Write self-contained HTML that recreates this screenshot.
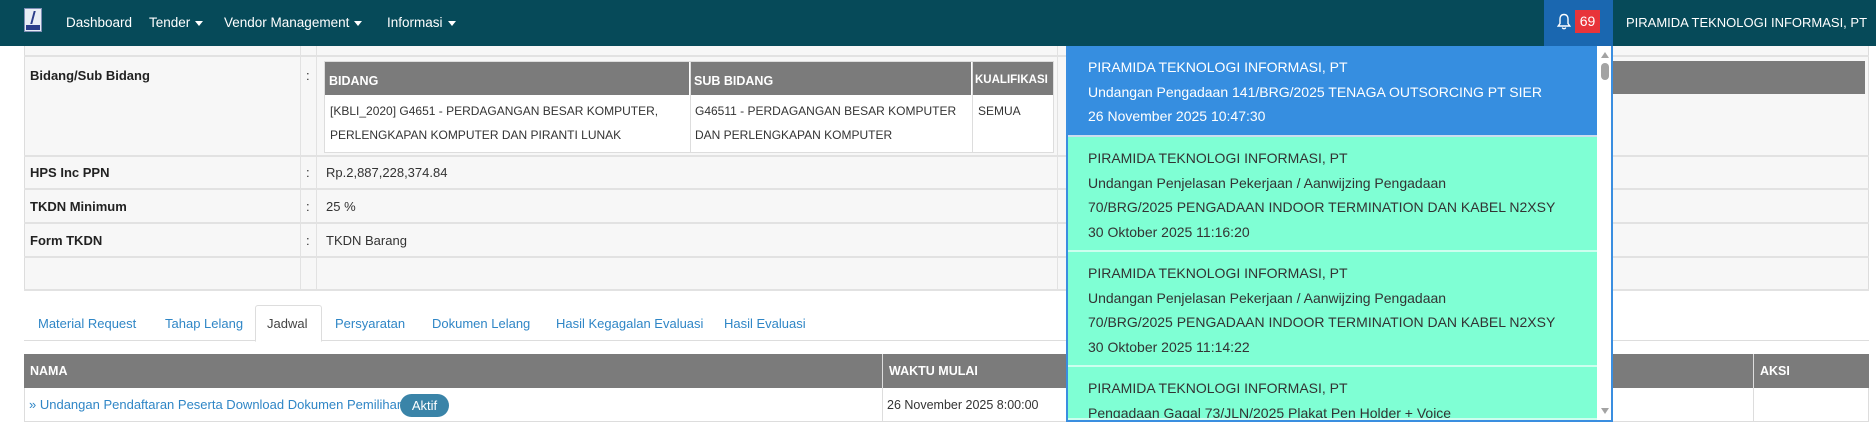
<!DOCTYPE html>
<html><head><meta charset="utf-8"><style>
*{box-sizing:border-box;margin:0;padding:0}
html,body{width:1876px;height:425px;overflow:hidden}
body{background:#fff;font-family:"Liberation Sans",sans-serif;font-size:13px;color:#333;position:relative}
.abs{position:absolute;white-space:nowrap}
.nav{left:0;top:0;width:1876px;height:46px;background:#064a59;color:#fff}
.nav .m{position:absolute;top:15px;font-size:13.5px;white-space:nowrap}
.car{display:inline-block;width:0;height:0;border-left:4px solid transparent;border-right:4px solid transparent;border-top:5px solid #fff;margin-left:5px;vertical-align:middle}
.box{left:24px;top:46px;width:1845px;height:245px;background:#f7f7f7;border:1px solid #ddd;border-top:none}
.hl{position:absolute;left:24px;width:1845px;height:2px;background:#e2e2e2}
.vl{position:absolute;width:1px;background:#e2e2e2}
.lbl{position:absolute;left:30px;font-weight:bold;font-size:13px;color:#222}
.col{position:absolute;left:306px;font-size:13px}
.val{position:absolute;left:326px;font-size:13px}
.it{position:absolute;left:324px;top:61px;width:730px;height:92px;background:#fff;border:1px solid #ddd}
.gh{position:absolute;background:#7b7b7b;color:#fff;font-weight:bold;font-size:12.5px;padding:12px 4px;white-space:nowrap;overflow:hidden}
.tc{position:absolute;font-size:12px;line-height:24px;color:#333;white-space:nowrap}
.dd{left:1066px;top:46px;width:547px;height:376px;border:2px solid #3a8ee0;border-top:none;background:#7fffd4;overflow:hidden}
.item{position:absolute;left:0;width:529px;height:115px;border-bottom:2px solid #cfe;font-size:14px;line-height:24.5px;padding:9px 0 0 20px;color:#333;white-space:nowrap;overflow:hidden}
.tab{position:absolute;top:316px;color:#2f86c6;font-size:13px;white-space:nowrap}
</style></head><body>
<div class="abs nav">
 <div class="abs" style="left:24px;top:8px;width:18px;height:24px;background:#e8edf5;border:1px solid #7f8fb5"><div style="position:absolute;left:7px;top:2px;width:2px;height:13px;background:#2a3d8a;transform:skewX(-15deg)"></div><div style="position:absolute;left:1px;top:16px;width:14px;height:5px;background:#2a3d8a"></div></div>
 <span class="m" style="left:66px">Dashboard</span>
 <span class="m" style="left:149px">Tender<i class="car"></i></span>
 <span class="m" style="left:224px">Vendor Management<i class="car"></i></span>
 <span class="m" style="left:387px">Informasi<i class="car"></i></span>
 <div class="abs" style="left:1544px;top:0;width:69px;height:46px;background:#1a67b0">
  <svg class="abs" style="left:13px;top:13px" width="14" height="17" viewBox="0 0 14 17"><path d="M7 1.5C4.2 1.5 3 3.6 3 6v4.5L1.2 13h11.6L11 10.5V6C11 3.6 9.8 1.5 7 1.5z" fill="none" stroke="#fff" stroke-width="1.4"/><path d="M5.3 14.5a1.8 1.8 0 0 0 3.4 0" fill="none" stroke="#fff" stroke-width="1.3"/></svg>
  <div class="abs" style="left:31px;top:10px;width:25px;height:23px;background:#e8343a;color:#fff;font-size:14px;text-align:center;line-height:23px">69</div>
 </div>
 <span class="m" style="left:1626px;font-size:13px">PIRAMIDA TEKNOLOGI INFORMASI, PT</span>
</div>

<div class="abs box"></div>
<div class="hl" style="top:55px"></div>
<div class="hl" style="top:155px"></div>
<div class="hl" style="top:188px"></div>
<div class="hl" style="top:222px"></div>
<div class="hl" style="top:256px"></div>
<div class="hl" style="top:289px"></div>
<div class="vl" style="left:300px;top:46px;height:244px"></div>
<div class="vl" style="left:316px;top:46px;height:244px"></div>
<div class="vl" style="left:1057px;top:46px;height:244px"></div>

<div class="lbl" style="top:68px">Bidang/Sub Bidang</div><div class="col" style="top:68px">:</div>
<div class="lbl" style="top:165px">HPS Inc PPN</div><div class="col" style="top:165px">:</div><div class="val" style="top:165px">Rp.2,887,228,374.84</div>
<div class="lbl" style="top:199px">TKDN Minimum</div><div class="col" style="top:199px">:</div><div class="val" style="top:199px">25 %</div>
<div class="lbl" style="top:233px">Form TKDN</div><div class="col" style="top:233px">:</div><div class="val" style="top:233px">TKDN Barang</div>

<div class="it"></div>
<div class="gh" style="left:325px;top:62px;width:364px;height:33px">BIDANG</div>
<div class="gh" style="left:690px;top:62px;width:281px;height:33px">SUB BIDANG</div>
<div class="gh" style="left:972px;top:62px;width:81px;height:33px;padding-left:3px;font-size:11.5px">KUALIFIKASI</div>
<div class="vl" style="left:690px;top:62px;height:90px;background:#ddd"></div>
<div class="vl" style="left:972px;top:62px;height:90px;background:#ddd"></div>
<div class="tc" style="left:330px;top:99px">[KBLI_2020] G4651 - PERDAGANGAN BESAR KOMPUTER,<br>PERLENGKAPAN KOMPUTER DAN PIRANTI LUNAK</div>
<div class="tc" style="left:695px;top:99px">G46511 - PERDAGANGAN BESAR KOMPUTER<br>DAN PERLENGKAPAN KOMPUTER</div>
<div class="tc" style="left:978px;top:99px">SEMUA</div>
<div class="gh" style="left:1613px;top:61px;width:252px;height:33px"></div>

<div class="hl" style="top:340px;height:1px;background:#ddd"></div>
<div class="abs" style="left:255px;top:305px;width:67px;height:37px;background:#fff;border:1px solid #ddd;border-bottom:1px solid #fff;border-radius:3px 3px 0 0"></div>
<div class="tab" style="left:38px">Material Request</div>
<div class="tab" style="left:165px">Tahap Lelang</div>
<div class="tab" style="left:267px;color:#444">Jadwal</div>
<div class="tab" style="left:335px">Persyaratan</div>
<div class="tab" style="left:432px">Dokumen Lelang</div>
<div class="tab" style="left:556px">Hasil Kegagalan Evaluasi</div>
<div class="tab" style="left:724px">Hasil Evaluasi</div>

<div class="gh" style="left:24px;top:354px;width:1845px;height:34px;padding:10px 6px">NAMA</div>
<div class="gh" style="left:882px;top:354px;width:300px;height:34px;padding:10px 6px;border-left:1px solid #ddd">WAKTU MULAI</div>
<div class="gh" style="left:1753px;top:354px;width:116px;height:34px;padding:10px 6px;border-left:1px solid #ddd">AKSI</div>
<div class="abs" style="left:24px;top:388px;width:1845px;height:34px;border:1px solid #ddd;border-top:none"></div>
<div class="vl" style="left:882px;top:388px;height:34px;background:#ddd"></div>
<div class="vl" style="left:1753px;top:388px;height:34px;background:#ddd"></div>
<div class="abs" style="left:29px;top:397px;color:#2f86c6;font-size:13px">» Undangan Pendaftaran Peserta Download Dokumen Pemilihan</div>
<div class="abs" style="left:400px;top:394px;width:49px;height:23px;border-radius:12px;background:#3a84a8;color:#fff;font-size:13px;text-align:center;line-height:23px">Aktif</div>
<div class="abs" style="left:887px;top:398px;font-size:12.5px">26 November 2025 8:00:00</div>

<div class="abs dd">
 <div class="item" style="top:0;height:91px;background:#368ee0;color:#fff;border-bottom-color:#cde">PIRAMIDA TEKNOLOGI INFORMASI, PT<br>Undangan Pengadaan 141/BRG/2025 TENAGA OUTSORCING PT SIER<br>26 November 2025 10:47:30</div>
 <div class="item" style="top:91px">PIRAMIDA TEKNOLOGI INFORMASI, PT<br>Undangan Penjelasan Pekerjaan / Aanwijzing Pengadaan<br>70/BRG/2025 PENGADAAN INDOOR TERMINATION DAN KABEL N2XSY<br>30 Oktober 2025 11:16:20</div>
 <div class="item" style="top:206px">PIRAMIDA TEKNOLOGI INFORMASI, PT<br>Undangan Penjelasan Pekerjaan / Aanwijzing Pengadaan<br>70/BRG/2025 PENGADAAN INDOOR TERMINATION DAN KABEL N2XSY<br>30 Oktober 2025 11:14:22</div>
 <div class="item" style="top:321px;height:53px">PIRAMIDA TEKNOLOGI INFORMASI, PT<br>Pengadaan Gagal 73/JLN/2025 Plakat Pen Holder + Voice</div>
 <div class="abs" style="left:529px;top:0;width:16px;height:374px;background:#fff">
  <div class="abs" style="left:4px;top:6px;border-left:4px solid transparent;border-right:4px solid transparent;border-bottom:6px solid #a3a3a3"></div>
  <div class="abs" style="left:4px;top:17px;width:8px;height:17px;border-radius:4px;background:#a3a3a3"></div>
  <div class="abs" style="left:4px;top:362px;border-left:4px solid transparent;border-right:4px solid transparent;border-top:6px solid #a3a3a3"></div>
 </div>
</div>
</body></html>
